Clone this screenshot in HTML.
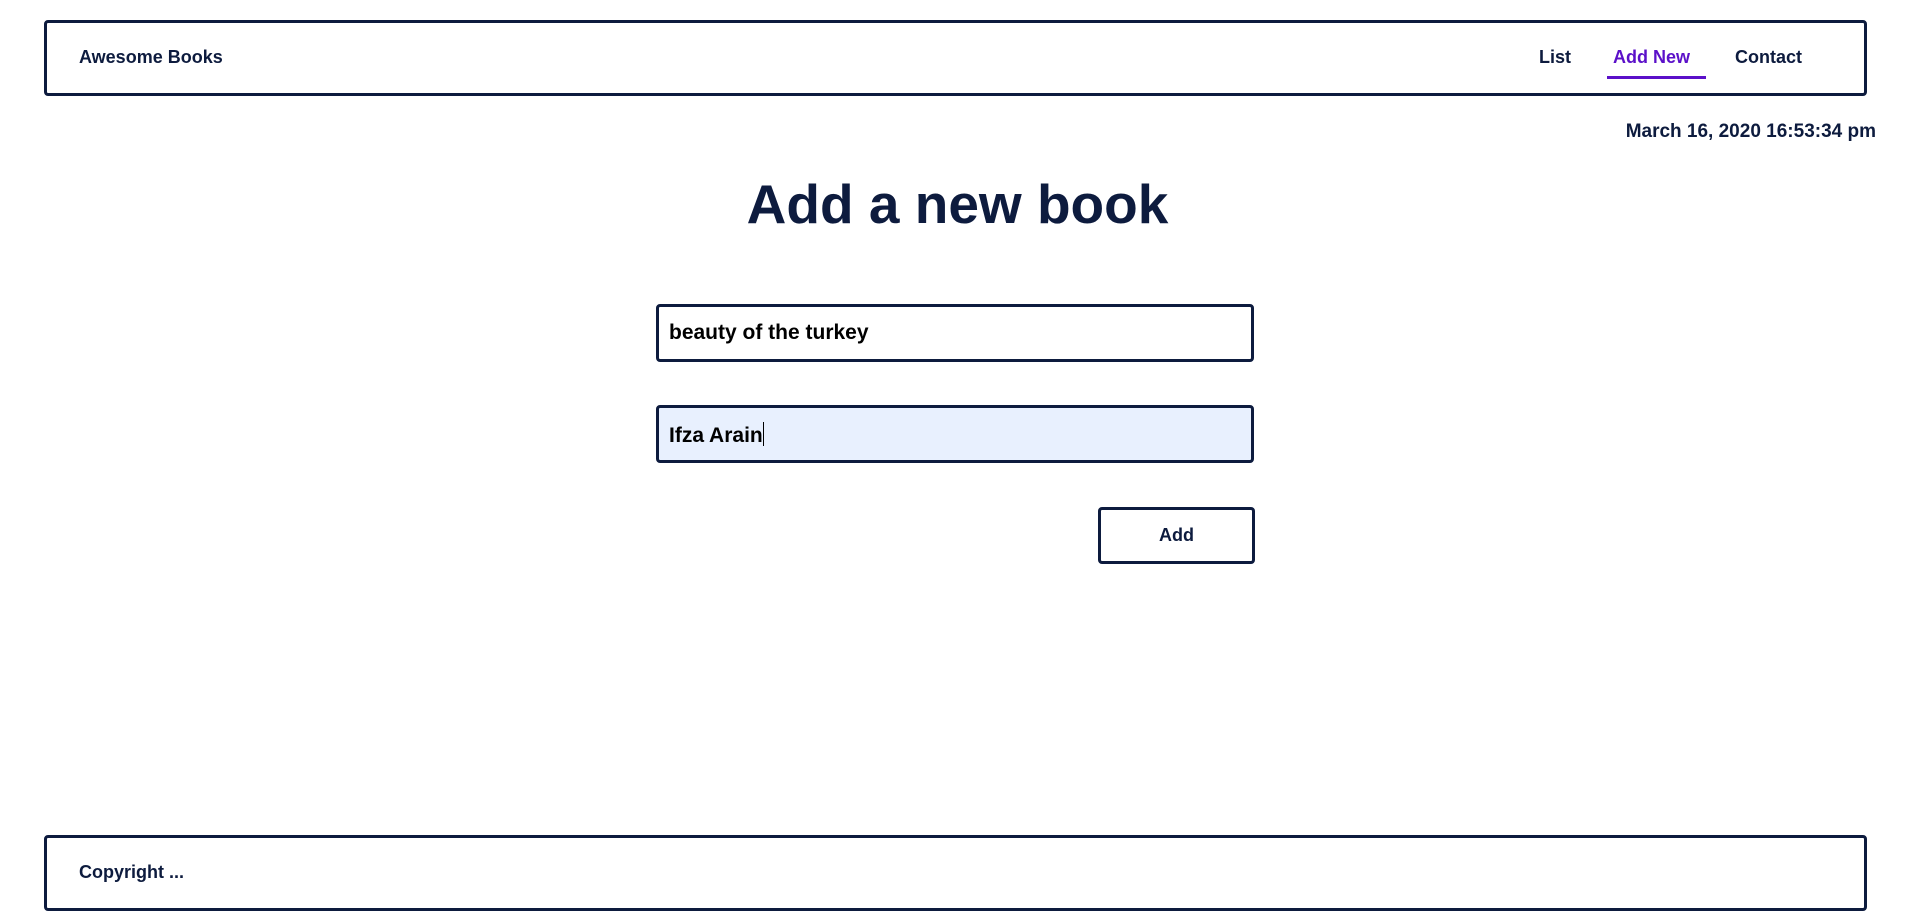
<!DOCTYPE html>
<html><head><meta charset="utf-8"><style>
*{margin:0;padding:0;box-sizing:border-box}
body{width:1915px;height:911px;background:#fff;font-family:"Liberation Sans",sans-serif;color:#0d1b3e;position:relative;overflow:hidden}
.box{position:absolute;border:3px solid #0d1b3e;border-radius:4px}
.t{position:absolute;font-weight:bold;white-space:nowrap}
</style></head><body>
<div class="box" style="left:44px;top:20px;width:1823px;height:76px"></div>
<div class="t" style="left:79px;top:47px;font-size:18px">Awesome Books</div>
<div class="t" style="left:1539px;top:47px;font-size:18px">List</div>
<div class="t" style="left:1613px;top:47px;font-size:18px;color:#5b10c9">Add New</div>
<div style="position:absolute;left:1607px;top:76px;width:99px;height:3px;background:#5b10c9"></div>
<div class="t" style="left:1735px;top:47px;font-size:18px">Contact</div>
<div class="t" style="right:39px;top:121px;font-size:19px">March 16, 2020 16:53:34 pm</div>
<div class="t" style="left:0;width:1915px;text-align:center;top:172px;font-size:55px">Add a new book</div>
<div class="box" style="left:656px;top:304px;width:598px;height:58px"></div>
<div class="t" style="left:669px;top:321px;font-size:21px;color:#000">beauty of the turkey</div>
<div class="box" style="left:656px;top:405px;width:598px;height:58px;background:#e8f0fe"></div>
<div class="t" style="left:669px;top:422px;font-size:21px;color:#000">Ifza Arain<span style="display:inline-block;width:1px;height:24px;background:#000;vertical-align:-4px;font-weight:normal"></span></div>
<div class="box" style="left:1098px;top:507px;width:157px;height:57px"></div>
<div class="t" style="left:1098px;width:157px;text-align:center;top:525px;font-size:18px">Add</div>
<div class="box" style="left:44px;top:835px;width:1823px;height:76px"></div>
<div class="t" style="left:79px;top:862px;font-size:18px">Copyright ...</div>
</body></html>
